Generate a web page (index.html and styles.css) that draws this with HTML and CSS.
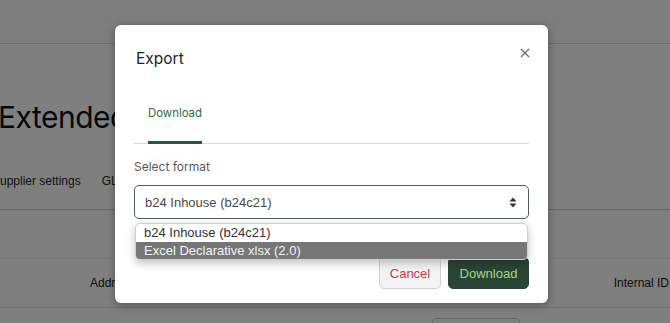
FILE: index.html
```html
<!DOCTYPE html>
<html>
<head>
<meta charset="utf-8">
<link rel="stylesheet" href="styles.css">
</head>
<body>
<div class="page">
  <div class="topbar"></div>
  <h1 class="page-title">Extended</h1>
  <div class="page-tabs">
    <span class="ptab ptab-first">Supplier settings</span>
    <span class="ptab">GLN</span>
  </div>
  <div class="table-head">
    <span class="th th-addr">Address</span>
    <span class="th th-id">Internal ID</span>
  </div>
  <div class="table-row">
    <span class="row-box"></span>
  </div>
</div>
<div class="backdrop"></div>

<div class="modal">
  <div class="modal-header">
    <h2 class="modal-title">Export</h2>
    <span class="close">
      <svg width="10" height="10" viewBox="0 0 10 10"><path d="M1 1 L9 9 M9 1 L1 9" stroke="#6b6b6b" stroke-width="1.3" fill="none"/></svg>
    </span>
  </div>
  <div class="tabs">
    <span class="tab active">Download</span>
  </div>
  <label class="field-label">Select format</label>
  <div class="select">
    <span class="select-value">b24 Inhouse (b24c21)</span>
    <svg class="select-arrows" width="8" height="11" viewBox="0 0 8 11"><path d="M4 0.5 L7.5 4.5 L0.5 4.5 Z M4 10.5 L7.5 6.5 L0.5 6.5 Z" fill="#333"/></svg>
  </div>
  <div class="footer">
    <button class="btn btn-cancel">Cancel</button>
    <button class="btn btn-primary">Download</button>
  </div>
  <ul class="dropdown">
    <li class="opt">b24 Inhouse (b24c21)</li>
    <li class="opt opt-hl">Excel Declarative xlsx (2.0)</li>
  </ul>
</div>
</body>
</html>
```

FILE: styles.css
```css
* { box-sizing: border-box; }
html, body { margin: 0; padding: 0; }
body {
  width: 670px;
  height: 323px;
  overflow: hidden;
  background: #ffffff;
  font-family: "Liberation Sans", Arial, sans-serif;
  position: relative;
}
.page { width: 670px; height: 323px; color: #1a1a1a; }
.topbar { height: 44px; border-bottom: 1px solid #d6d6d6; background: #fdfdfd; }
.page-title {
  margin: 53px 0 0 -2px;
  font-family: "Inter", sans-serif;
  font-weight: 400;
  font-size: 30px;
  line-height: 40px;
  letter-spacing: -0.5px;
  color: #111;
}
.page-tabs {
  display: flex;
  gap: 21px;
  height: 73px;
  padding-top: 37px;
  border-bottom: 1px solid #cfcfcf;
  font-family: "Liberation Sans", Arial, sans-serif;
  font-size: 12px;
  line-height: 14px;
  color: #2a2a2a;
}
.ptab-first { margin-left: -8px; }
.table-head {
  margin-top: 48px;
  height: 50px;
  border-top: 1px solid #eeeeee;
  border-bottom: 1px solid #dcdcdc;
  display: flex;
  align-items: center;
  font-family: "Liberation Sans", Arial, sans-serif;
  font-size: 12px;
  color: #1a1a1a;
}
.th-addr { margin-left: 90px; }
.th-id { margin-left: auto; margin-right: 1px; }
.table-row { padding: 10px 0 0 432px; }
.row-box { display: block; width: 88px; height: 20px; border: 1px solid #cfcfcf; border-radius: 4px; }

.backdrop {
  position: absolute;
  inset: 0;
  background: rgba(0, 0, 0, 0.5);
}

.modal {
  position: absolute;
  left: 115px;
  top: 25px;
  width: 433px;
  height: 278px;
  background: #fff;
  border-radius: 6px;
  box-shadow: 0 2px 10px rgba(0,0,0,0.35);
  padding: 0 19px;
}
.modal-header {
  display: flex;
  align-items: center;
  justify-content: space-between;
  height: 64px;
  padding-top: 2px;
}
.modal-title {
  margin: 0 0 0 2px;
  font-family: "Inter", "Liberation Sans", sans-serif;
  font-weight: 400;
  font-size: 15.5px;
  color: #222;
}
.close { display: flex; margin-right: -1px; margin-top: -10px; }
.tabs {
  display: flex;
  border-bottom: 1px solid #d3dcdd;
  padding-left: 14px;
}
.tab {
  font-family: "Inter", "Liberation Sans", sans-serif;
  font-size: 11.4px;
  color: #2e6b47;
  padding: 16px 0 20px;
  line-height: 16px;
  border-bottom: 3px solid #1f5b3b;
  margin-bottom: -1px;
}
.field-label {
  display: block;
  margin-top: 15px;
  font-family: "Inter", "Liberation Sans", sans-serif;
  font-size: 12px;
  color: #595959;
  line-height: 16px;
}
.select {
  margin-top: 10px;
  height: 34px;
  border: 1px solid #4f6157;
  border-radius: 5px;
  display: flex;
  align-items: center;
  justify-content: space-between;
  padding: 0 11px 0 10px;
  font-size: 13px;
  color: #4a4a4a;
}
.select-arrows { display: block; }
.footer {
  display: flex;
  justify-content: flex-end;
  gap: 7px;
  margin-top: 38px;
}
.btn {
  height: 32px;
  border-radius: 5px;
  font-family: "Liberation Sans", Arial, sans-serif;
  font-size: 13px;
  padding: 0;
  cursor: pointer;
}
.btn-cancel {
  width: 62px;
  background: #f4f4f4;
  border: 1px solid #d2d2d2;
  color: #c33a4b;
}
.btn-primary {
  width: 81px;
  background: #284536;
  border: 1px solid #284536;
  color: #a6d581;
}
.dropdown {
  position: absolute;
  left: 20px;
  top: 198px;
  width: 393px;
  margin: 0;
  padding: 0;
  list-style: none;
  background: #fff;
  border: 1px solid #d0d0d0;
  border-radius: 5px;
  overflow: hidden;
  box-shadow: 0 3px 8px rgba(0,0,0,0.25);
  font-size: 13px;
}
.opt {
  height: 17.5px;
  line-height: 17px;
  padding-left: 8px;
  color: #333;
}
.opt-hl { background: #767676; color: #f4f4f4; }
```
